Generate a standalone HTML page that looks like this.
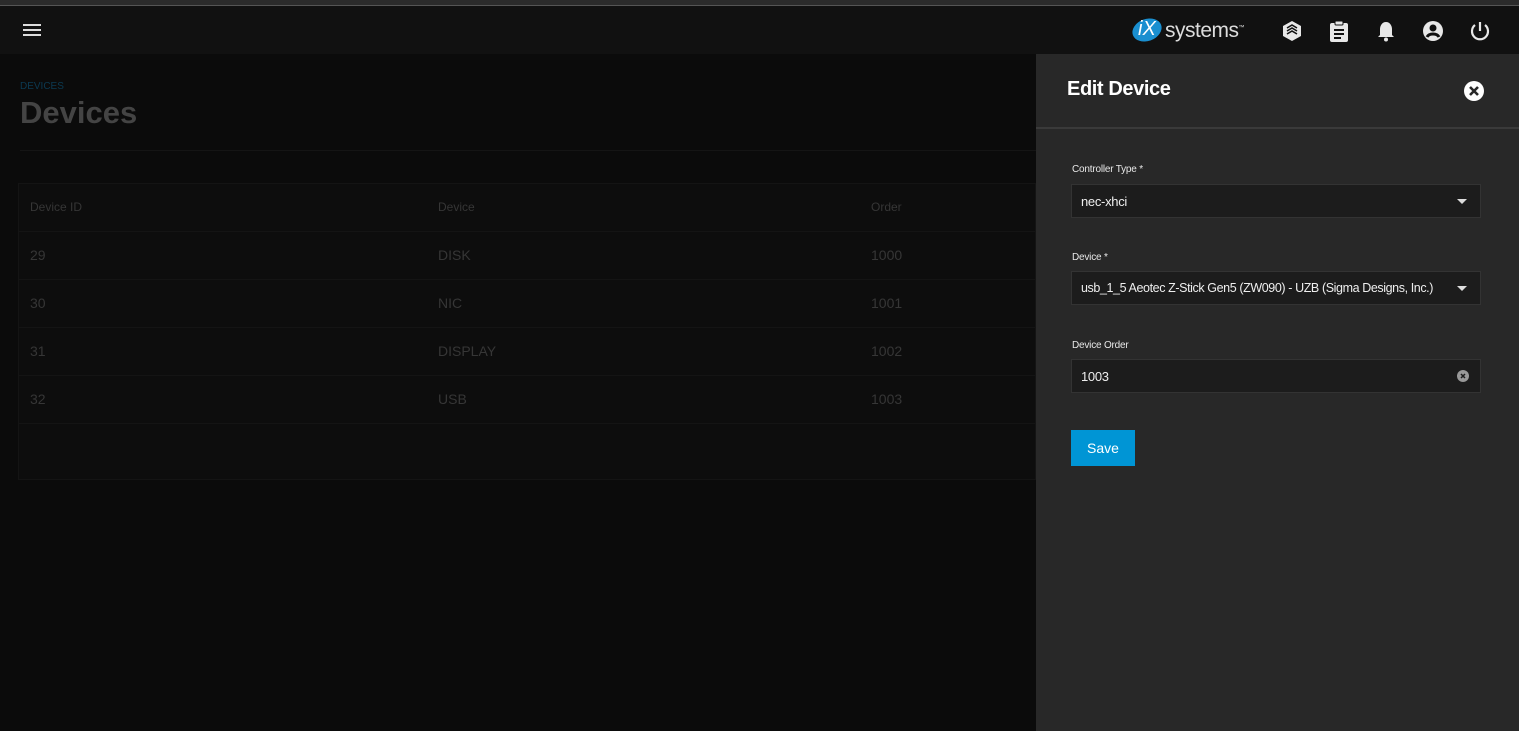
<!DOCTYPE html>
<html><head><meta charset="utf-8"><style>
*{margin:0;padding:0;box-sizing:border-box}
body{width:1519px;height:731px;overflow:hidden;background:#0b0b0b;font-family:"Liberation Sans",sans-serif;position:relative}
.topline{position:absolute;left:0;top:0;width:1519px;height:6px;background:#2b2b2b;border-bottom:1px solid #555}
.bar{position:absolute;left:0;top:6px;width:1519px;height:48px;background:#111}
.abs{position:absolute}
.t{color:#363636;font-size:14px}
.panel{position:absolute;left:1036px;top:54px;width:483px;height:677px;background:#282828}
.lbl{position:absolute;left:36px;font-size:10px;color:#e8e8e8;letter-spacing:-0.2px}
.fld{position:absolute;left:35px;width:410px;height:34px;background:#1c1c1c;border:1px solid #333;color:#eee;font-size:13px;padding:9px 9px;white-space:nowrap;letter-spacing:-0.3px}
.arr{position:absolute;right:13px;top:14px;width:0;height:0;border-left:5px solid transparent;border-right:5px solid transparent;border-top:5px solid #ddd}
</style></head><body>
<div class="topline"></div>
<div class="bar">
 <div class="abs" style="left:23px;top:18px;width:18px;height:2px;background:#ddd;box-shadow:0 5px #ddd,0 10px #ddd"></div>
 <div class="abs" style="left:1132px;top:13px;width:30px;height:22px;background:#1a8fd0;border-radius:50%;transform:rotate(-20deg)"></div>
 <div class="abs" style="left:1138px;top:12px;color:#fff;font-size:20px;font-style:italic">iX</div>
 <div class="abs" style="left:1165px;top:13px;color:#ddd;font-size:21px;letter-spacing:-0.5px">systems<span style="font-size:6px;vertical-align:8px">™</span></div>
 <svg class="abs" style="left:1281px;top:14px" width="22" height="22" viewBox="0 0 22 22"><path d="M11 1L20 6V16L11 21L2 16V6Z" fill="#e8e8e8"/><path d="M6 8L11 5L16 8M6 11L11 8L16 11M6 14L11 11L16 14" stroke="#111" stroke-width="1.6" fill="none"/></svg>
 <svg class="abs" style="left:1329px;top:14px" width="20" height="22" viewBox="0 0 20 22"><rect x="1" y="3" width="18" height="19" rx="2" fill="#e8e8e8"/><rect x="6" y="1" width="8" height="4" rx="1" fill="#e8e8e8" stroke="#111"/><path d="M5 10H15M5 14H15M5 18H12" stroke="#111" stroke-width="2"/></svg>
 <svg class="abs" style="left:1377px;top:14px" width="18" height="22" viewBox="0 0 18 22"><path d="M9 2C5 2 3 6 3 9V15L1 17H17L15 15V9C15 6 13 2 9 2Z" fill="#e8e8e8"/><circle cx="9" cy="19.5" r="2" fill="#e8e8e8"/></svg>
 <svg class="abs" style="left:1422px;top:14px" width="22" height="22" viewBox="0 0 22 22"><circle cx="11" cy="11" r="10" fill="#e8e8e8"/><circle cx="11" cy="8" r="3.5" fill="#111"/><path d="M5 17C7 13 15 13 17 17" stroke="#111" stroke-width="3" fill="none"/></svg>
 <svg class="abs" style="left:1469px;top:14px" width="22" height="22" viewBox="0 0 22 22"><path d="M11 2V11" stroke="#e8e8e8" stroke-width="2.2"/><path d="M6 5A8 8 0 1 0 16 5" stroke="#e8e8e8" stroke-width="2.2" fill="none"/></svg>
</div>
<div class="abs" style="left:20px;top:81px;color:#0c3a52;font-size:10px">DEVICES</div>
<div class="abs" style="left:20px;top:95px;color:#444;font-size:31px;font-weight:bold">Devices</div>
<div class="abs" style="left:20px;top:150px;width:1016px;height:1px;background:#151515"></div>
<div class="abs" style="left:18px;top:183px;width:1018px;height:297px;background:#0d0d0d;border:1px solid #141414"></div>
<div class="abs t" style="left:30px;top:200px;font-size:12px">Device ID</div>
<div class="abs t" style="left:438px;top:200px;font-size:12px">Device</div>
<div class="abs t" style="left:871px;top:200px;font-size:12px">Order</div>
<div class="abs" style="left:18px;top:231px;width:1018px;height:1px;background:#141414;box-shadow:0 48px #141414,0 96px #141414,0 144px #141414,0 192px #141414"></div>
<div class="abs t" style="left:30px;top:247px">29</div><div class="abs t" style="left:438px;top:247px">DISK</div><div class="abs t" style="left:871px;top:247px">1000</div>
<div class="abs t" style="left:30px;top:295px">30</div><div class="abs t" style="left:438px;top:295px">NIC</div><div class="abs t" style="left:871px;top:295px">1001</div>
<div class="abs t" style="left:30px;top:343px">31</div><div class="abs t" style="left:438px;top:343px">DISPLAY</div><div class="abs t" style="left:871px;top:343px">1002</div>
<div class="abs t" style="left:30px;top:391px">32</div><div class="abs t" style="left:438px;top:391px">USB</div><div class="abs t" style="left:871px;top:391px">1003</div>
<div class="panel">
 <div class="abs" style="left:31px;top:24px;color:#fff;font-size:20px;font-weight:bold;letter-spacing:-0.4px">Edit Device</div>
 <svg class="abs" style="left:427px;top:26px" width="22" height="22" viewBox="0 0 22 22"><circle cx="11" cy="11" r="10" fill="#fff"/><path d="M7 7L15 15M15 7L7 15" stroke="#282828" stroke-width="2.6"/></svg>
 <div class="abs" style="left:0;top:73px;width:483px;height:2px;background:#3a3a3a"></div>
 <div class="lbl" style="top:110px">Controller Type *</div>
 <div class="fld" style="top:130px">nec-xhci<div class="arr"></div></div>
 <div class="lbl" style="top:198px">Device *</div>
 <div class="fld" style="top:217px;font-size:12.5px;letter-spacing:-0.4px">usb_1_5 Aeotec Z-Stick Gen5 (ZW090) - UZB (Sigma Designs, Inc.)<div class="arr"></div></div>
 <div class="lbl" style="top:286px">Device Order</div>
 <div class="fld" style="top:305px">1003<svg class="abs" style="right:11px;top:10px" width="12" height="12" viewBox="0 0 12 12"><circle cx="6" cy="6" r="6" fill="#999"/><path d="M4 4L8 8M8 4L4 8" stroke="#1c1c1c" stroke-width="1.5"/></svg></div>
 <div class="abs" style="left:35px;top:376px;width:64px;height:36px;background:#0095d5;color:#fff;font-size:14px;text-align:center;line-height:36px">Save</div>
</div>
</body></html>
